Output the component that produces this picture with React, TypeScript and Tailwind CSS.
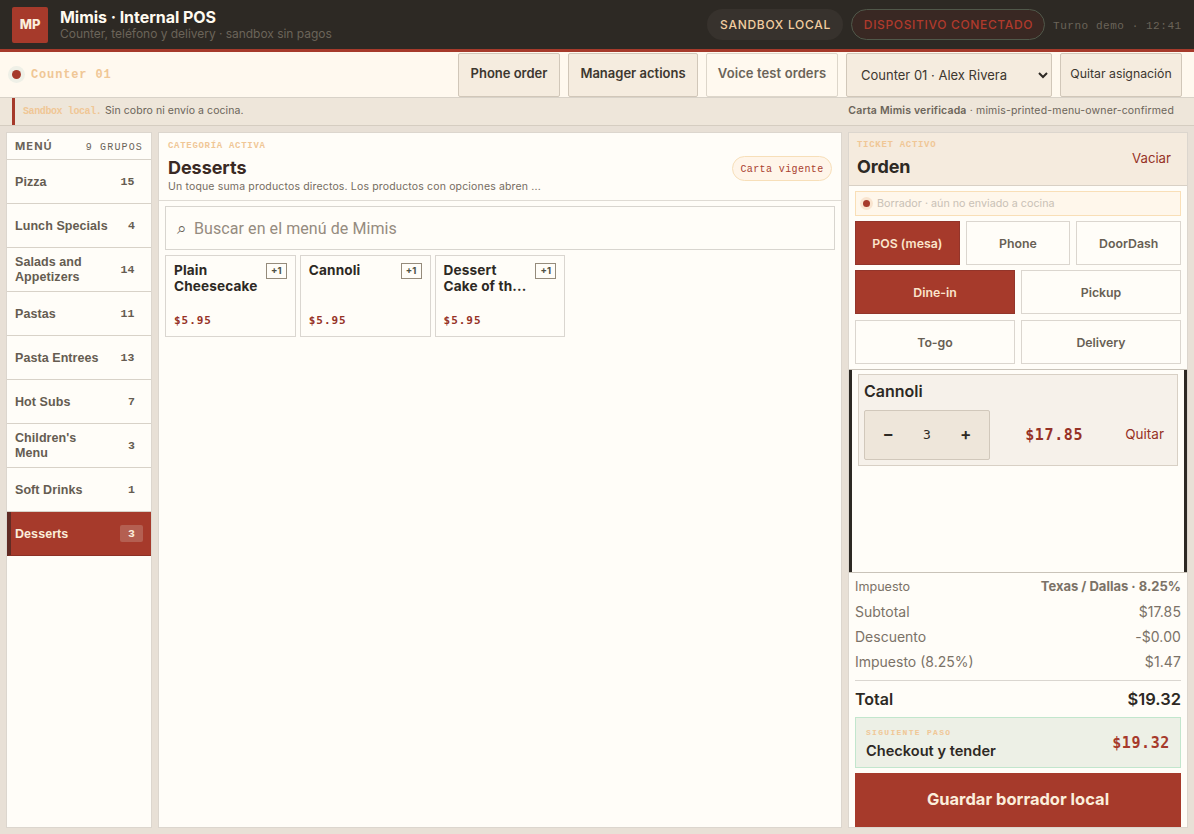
import { useState } from 'react';

const categories = [
  { name: 'Pizza', count: 15 },
  { name: 'Lunch Specials', count: 4 },
  { name: 'Salads and Appetizers', count: 14 },
  { name: 'Pastas', count: 11 },
  { name: 'Pasta Entrees', count: 13 },
  { name: 'Hot Subs', count: 7 },
  { name: "Children's Menu", count: 3 },
  { name: 'Soft Drinks', count: 1 },
  { name: 'Desserts', count: 3 },
];

const products = [
  { name: 'Plain Cheesecake', price: '$5.95' },
  { name: 'Cannoli', price: '$5.95' },
  { name: 'Dessert Cake of th...', price: '$5.95' },
];

const totals = [
  { label: 'Subtotal', value: '$17.85' },
  { label: 'Descuento', value: '-$0.00' },
  { label: 'Impuesto (8.25%)', value: '$1.47' },
];

const Header = () => (
  <header className="flex h-[52px] shrink-0 items-center border-b-[3px] border-[#a63a2b] bg-[#2d2924] px-3">
    <div className="flex h-9 w-9 items-center justify-center rounded-[2px] bg-[#a63a2b] text-[13px] font-extrabold text-[#fbeedb]">
      MP
    </div>
    <div className="ml-3 flex-1">
      <div className="text-[16px] leading-[17px] font-bold tracking-[-0.05px] text-[#fffaf0]">Mimis · Internal POS</div>
      <div className="text-[12px] leading-[15px] tracking-[-0.03px] text-[#6b6459]">
        Counter, teléfono y delivery · sandbox sin pagos
      </div>
    </div>
    <div className="flex items-center gap-2">
      <span className="flex h-[31px] w-[136px] items-center justify-center rounded-full bg-[#37322d] pl-px text-[12px] font-medium tracking-[0.72px] text-[#f1cda0]">
        SANDBOX LOCAL
      </span>
      <span className="flex h-[31px] w-[194px] items-center justify-center rounded-full border border-[#50584a] bg-[#392823] pl-px text-[12px] font-medium tracking-[0.66px] text-[#b03a2c]">
        DISPOSITIVO CONECTADO
      </span>
      <span className="w-[129px] pt-[3px] font-['Liberation_Mono',monospace] text-[11px] tracking-[0.55px] whitespace-nowrap text-[#6b6459]">
        Turno demo · 12:41
      </span>
    </div>
  </header>
);

const Toolbar = () => (
  <div className="flex h-[46px] shrink-0 items-start border-b border-[#d8d2c8] bg-[#fff9ef] pt-px pr-3 pl-3 text-[13px] text-[#3d372f]">
    <div className="flex h-[43px] flex-1 items-center">
      <span className="h-[9px] w-[9px] rounded-full bg-[#a63a2b] ring-4 ring-[#eff0e7]" />
      <span className="ml-[10px] font-['Liberation_Mono',monospace] text-[12px] font-bold tracking-[0.85px] text-[#f0c796]">
        Counter 01
      </span>
    </div>
    <div className="flex gap-2">
      <button className="h-11 w-[102px] rounded-[2px] border border-[#d1c7b9] bg-[#f5ecdf] pb-[2px] text-[13px] font-semibold">
        Phone order
      </button>
      <button className="h-11 w-[130px] rounded-[2px] border border-[#d1c7b9] bg-[#f5ecdf] pb-[2px] text-[13px] font-semibold">
        Manager actions
      </button>
      <button className="h-11 w-[132px] rounded-[2px] border border-[#ddd6ca] bg-[#fff9ef] pb-[2px] text-[13px] font-semibold tracking-[0.1px] text-[#6b6459]">
        Voice test orders
      </button>
      <div className="flex h-11 w-[206px] items-center justify-between rounded-[2px] border border-[#d1c7b9] bg-[#f5ecdf] pt-px pr-[3px] pl-[14px] text-[13px]">
        Counter 01 · Alex Rivera
        <svg width="10" height="7" viewBox="0 0 10 7" fill="none" stroke="#2d2924" strokeWidth="2">
          <path d="M1 1l4 4 4-4" />
        </svg>
      </div>
      <button className="h-11 w-[122px] rounded-[2px] border border-[#d1c7b9] bg-[#f5ecdf] pb-px text-[12.3px]">
        Quitar asignación
      </button>
    </div>
  </div>
);

const Notice = () => (
  <div className="flex h-[28px] shrink-0 justify-between border-b border-[#d5cdc1] bg-[#eee6da] pr-5 pl-3 text-[10.5px] text-[#6b6459]">
    <div className="flex items-center border-l-[3px] border-[#a63a2b] pb-[2px] pl-[8px]">
      <span className="w-[82px] pt-px font-['Liberation_Mono',monospace] text-[10px] font-bold tracking-[-0.4px] text-[#f0c796]">
        Sandbox local.
      </span>
      <span className="tracking-[0.07px]">Sin cobro ni envío a cocina.</span>
    </div>
    <div className="pt-[5px] tracking-[0.17px]">
      <b className="font-semibold">Carta Mimis verificada</b> · mimis-printed-menu-owner-confirmed
    </div>
  </div>
);

const MenuPanel = ({ active, onSelect }: { active: string; onSelect: (name: string) => void }) => (
  <aside className="w-[146px] border border-[#dcd6ce] bg-[#fffdf8]">
    <div className="flex h-[27px] items-center justify-between border-b border-[#d8d2c8] px-2 text-[#6b6459]">
      <span className="text-[11px] font-bold tracking-[1.1px]">MENÚ</span>
      <span className="pt-[2px] font-['Liberation_Mono',monospace] text-[10px] tracking-[1.15px]">9 GRUPOS</span>
    </div>
    {categories.map((c) => (
      <button
        key={c.name}
        onClick={() => onSelect(c.name)}
        className={`flex h-11 w-full items-center justify-between border-b pr-2 text-left ${
          c.name === active
            ? 'border-b-[#8c3025] border-l-4 border-l-[#612b24] bg-[#a63a2b] pl-1 text-[#fbeedb]'
            : 'border-b-[#d8d2c8] pl-2 text-[#655c51]'
        }`}
      >
        <span className="max-w-[95px] pt-px font-['Liberation_Sans',sans-serif] text-[12.5px] leading-[15px] font-bold tracking-[0.07px]">
          {c.name}
        </span>
        <span
          className={`flex h-[17px] w-[23px] items-center justify-center rounded-[2px] font-['Liberation_Mono',monospace] text-[11.5px] font-bold ${
            c.name === active ? 'bg-[#b45f51]' : ''
          } ${c.count > 9 ? 'mr-[4px]' : ''}`}
        >
          {c.count}
        </span>
      </button>
    ))}
  </aside>
);

const Catalog = () => (
  <section className="flex-1 border border-[#dcd6ce] bg-[#fffdf8]">
    <div className="flex h-[68px] items-start justify-between border-b border-[#dfdbd4] pr-[9px] pl-[9px]">
      <div className="pt-[7px]">
        <div className="font-['Liberation_Mono',monospace] text-[9px] leading-[12px] font-bold tracking-[0.7px] text-[#f0c796]">
          CATEGORÍA ACTIVA
        </div>
        <h1 className="mt-[4px] text-[18px] leading-[24px] font-bold tracking-[-0.05px] text-[#3a2a24]">Desserts</h1>
        <p className="text-[10.5px] leading-[14px] tracking-[0.16px] text-[#756c61]">
          Un toque suma productos directos. Los productos con opciones abren ...
        </p>
      </div>
      <span className="mt-[23px] flex h-[25px] w-[100px] items-center justify-center rounded-full border border-[#f7dfb9] bg-[#fff5e9] pt-px font-['Liberation_Mono',monospace] text-[10px] tracking-[0.4px] text-[#a9402f]">
        Carta vigente
      </span>
    </div>
    <div className="px-[6px] pt-[5px]">
      <div className="flex h-11 items-center border border-[#d8d5cf] pl-[11px]">
        <span className="w-[17px] text-[17px] leading-[17px] text-[#6b6459]">⌕</span>
        <input
          className="flex-1 bg-transparent pt-[2px] font-[Roboto,sans-serif] text-[16px] tracking-[0.08px] outline-none placeholder:text-[#958b7f]"
          placeholder="Buscar en el menú de Mimis"
        />
      </div>
      <div className="mt-[5px] grid grid-cols-5 gap-1">
        {products.map((p) => (
          <button
            key={p.name}
            className="flex h-[82px] flex-col justify-between border border-[#dad6d0] pt-[6px] pr-2 pb-2 pl-2 text-left"
          >
            <div className="flex w-full items-start justify-between">
              <span className="w-[88px] text-[13.6px] leading-[16px] font-bold tracking-[0.14px] text-[#2d2924]">
                {p.name}
              </span>
              <span className="mt-[1px] flex h-4 w-[21px] shrink-0 items-center justify-center border border-[#958b7b] text-[9.5px] font-bold text-[#4e5144]">
                +1
              </span>
            </div>
            <span className="font-['DejaVu_Sans_Mono',monospace] text-[11px] leading-[15px] font-bold tracking-[0.95px] text-[#963226]">
              {p.price}
            </span>
          </button>
        ))}
      </div>
    </div>
  </section>
);

const Choice = ({ label, selected }: { label: string; selected?: boolean }) => (
  <button
    className={`h-11 border pt-[2px] text-[12.3px] font-semibold ${
      selected ? 'border-[#93352a] bg-[#a63a2b] text-[#fbe5cc]' : 'border-[#dbd6cf] text-[#685f54]'
    }`}
  >
    {label}
  </button>
);

const Ticket = () => {
  const [qty, setQty] = useState(3);

  return (
    <aside className="flex w-[340px] flex-col border border-[#dcd6ce] bg-[#fffdf8]">
      <div className="flex h-[53px] shrink-0 justify-between border-b border-[#d8d0c5] bg-[#f5ebde] pr-4 pl-2">
        <div className="pt-[6px]">
          <div className="font-['Liberation_Mono',monospace] text-[9px] leading-[12px] font-bold tracking-[0.7px] text-[#f0c796]">
            TICKET ACTIVO
          </div>
          <h2 className="mt-[5px] text-[18px] leading-[22px] font-bold tracking-[-0.15px] text-[#2d2924]">Orden</h2>
        </div>
        <button className="text-[13.2px] text-[#963226]">Vaciar</button>
      </div>

      <div className="px-[6px] pt-[5px]">
        <div className="flex h-[25px] items-center border border-[#f9dfb7] bg-[#fff7eb] pl-[7px] text-[10.75px] text-[#c9c1b6]">
          <span className="mr-[7px] h-[7px] w-[7px] rounded-full bg-[#a63a2b] ring-[3px] ring-[#f9e4cf]" />
          <span className="pt-px">Borrador · aún no enviado a cocina</span>
        </div>
        <div className="mt-[5px] grid grid-cols-3 gap-[6px]">
          <Choice label="POS (mesa)" selected />
          <Choice label="Phone" />
          <Choice label="DoorDash" />
        </div>
        <div className="mt-[5px] grid grid-cols-2 gap-[6px]">
          <Choice label="Dine-in" selected />
          <Choice label="Pickup" />
          <Choice label="To-go" />
          <Choice label="Delivery" />
        </div>
      </div>

      {/* Order lines */}
      <div className="mt-[5px] h-[204px] shrink-0 border-y border-[#c9c3b9]">
        <div className="h-full border-x-[3px] border-[#2d2924] px-[6px] pt-1">
          <div className="h-[92px] border border-[#d8d0c5] bg-[#f6f1ea] pt-[6px] pr-[13px] pl-[5px]">
            <div className="text-[16px] leading-[20px] font-semibold text-[#2d2924]">Cannoli</div>
            <div className="mt-[9px] flex items-center justify-between">
              <div className="grid h-[50px] w-[126px] grid-cols-3 place-items-center rounded-[2px] border border-[#d1c8bb] bg-[#eee6da] px-1 text-[#2d2924]">
                <button className="text-[17px] font-semibold" onClick={() => setQty((q) => Math.max(1, q - 1))}>
                  −
                </button>
                <span className="font-['DejaVu_Sans_Mono',monospace] text-[13px]">{qty}</span>
                <button className="text-[17px] font-semibold" onClick={() => setQty((q) => q + 1)}>
                  +
                </button>
              </div>
              <span className="ml-[-7px] font-['DejaVu_Sans_Mono',monospace] text-[15px] font-bold tracking-[0.6px] text-[#963226]">
                $17.85
              </span>
              <button className="pb-px text-[13.5px] text-[#963226]">Quitar</button>
            </div>
          </div>
        </div>
      </div>

      <div className="flex flex-1 flex-col px-[6px] text-[#7b7267]">
        <div className="flex h-[26px] items-center justify-between pt-[2px] text-[12.6px]">
          <span>Impuesto</span>
          <b className="text-[13px] font-bold">Texas / Dallas · 8.25%</b>
        </div>
        {totals.map((t) => (
          <div key={t.label} className="flex h-[25px] items-center justify-between text-[14px]">
            <span>{t.label}</span>
            <span className="tracking-[0.1px]">{t.value}</span>
          </div>
        ))}
        <div className="mt-[6px] flex h-[37px] items-center justify-between border-t border-[#dad6d0] text-[16px] font-semibold text-[#2d2924]">
          <span>Total</span>
          <span className="text-[16.5px]">$19.32</span>
        </div>
        <div className="flex h-[51px] items-center justify-between border border-[#c2e6cd] bg-[#edf0e6] px-[10px]">
          <div className="pt-[2px]">
            <div className="font-['Liberation_Mono',monospace] text-[8px] leading-[13px] font-bold tracking-[1.3px] text-[#f0c796]">
              SIGUIENTE PASO
            </div>
            <div className="mt-[2px] text-[14.6px] leading-[20px] font-semibold text-[#2d2924]">Checkout y tender</div>
          </div>
          <span className="pt-px font-['DejaVu_Sans_Mono',monospace] text-[15px] font-bold tracking-[0.6px] text-[#a63a2b]">
            $19.32
          </span>
        </div>
        <button className="mt-[5px] flex-1 bg-[#a63a2b] pb-[2px] text-[16.5px] font-bold text-[#fbeedb]">
          Guardar borrador local
        </button>
      </div>
    </aside>
  );
};

const App = () => {
  const [active, setActive] = useState('Desserts');

  return (
    <div className="flex h-screen flex-col overflow-hidden bg-[#e8e0d6] font-[Inter,sans-serif]">
      <Header />
      <Toolbar />
      <Notice />
      <main className="flex min-h-0 flex-1 gap-[6px] p-[6px]">
        <MenuPanel active={active} onSelect={setActive} />
        <Catalog />
        <Ticket />
      </main>
    </div>
  );
};

export default App;
